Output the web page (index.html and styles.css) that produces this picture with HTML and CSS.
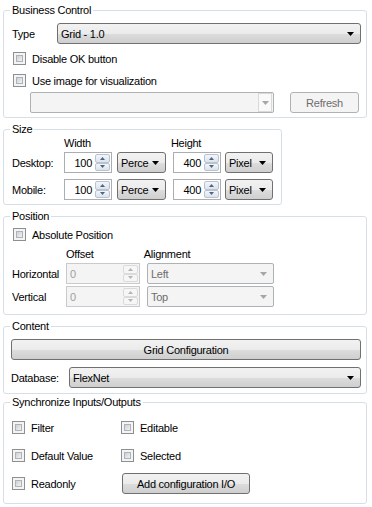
FILE: index.html
```html
<!DOCTYPE html>
<html lang="en">
<head>
    <meta charset="UTF-8">
    <title>Business Control</title>
    <link rel="stylesheet" href="styles.css">
</head>
<body>
    <div class="panel">
        <!-- Business Control -->
        <fieldset class="group group-business">
            <legend>Business Control</legend>
            <div class="row row-type">
                <span class="lbl lbl-type">Type</span>
                <div class="combo combo-type">
                    <span class="combo-text">Grid - 1.0</span>
                    <svg class="arrow" width="7" height="4" viewBox="0 0 7 4"><path d="M0 0h7L3.5 4z" fill="#000"/></svg>
                </div>
            </div>
            <div class="check check-ok"><span class="box"></span>Disable OK button</div>
            <div class="check check-image"><span class="box"></span>Use image for visualization</div>
            <div class="row row-image">
                <div class="combo-off combo-image">
                    <span class="combo-text"></span>
                    <span class="drop-off">
                        <svg width="7" height="4" viewBox="0 0 7 4"><path d="M0 0h7L3.5 4z" fill="#a6a6a6"/></svg>
                    </span>
                </div>
                <div class="btn-off btn-refresh">Refresh</div>
            </div>
        </fieldset>

        <!-- Size -->
        <fieldset class="group group-size">
            <legend>Size</legend>
            <div class="row row-head">
                <span class="head head-width">Width</span>
                <span class="head head-height">Height</span>
            </div>
            <div class="row row-size">
                <span class="lbl lbl-size">Desktop:</span>
                <div class="spin spin-size">
                    <span class="spin-text">100</span>
                    <span class="spin-btns">
                        <span class="spin-btn"><svg width="5" height="3" viewBox="0 0 5 3"><path d="M0 3h5L2.5 0z" fill="#4f6382"/></svg></span>
                        <span class="spin-btn"><svg width="5" height="3" viewBox="0 0 5 3"><path d="M0 0h5L2.5 3z" fill="#4f6382"/></svg></span>
                    </span>
                </div>
                <div class="combo combo-unit combo-perc">
                    <span class="combo-text">Perce</span>
                    <svg class="arrow" width="7" height="4" viewBox="0 0 7 4"><path d="M0 0h7L3.5 4z" fill="#000"/></svg>
                </div>
                <div class="spin spin-size spin-height">
                    <span class="spin-text">400</span>
                    <span class="spin-btns">
                        <span class="spin-btn"><svg width="5" height="3" viewBox="0 0 5 3"><path d="M0 3h5L2.5 0z" fill="#4f6382"/></svg></span>
                        <span class="spin-btn"><svg width="5" height="3" viewBox="0 0 5 3"><path d="M0 0h5L2.5 3z" fill="#4f6382"/></svg></span>
                    </span>
                </div>
                <div class="combo combo-unit combo-pixel">
                    <span class="combo-text">Pixel</span>
                    <svg class="arrow" width="7" height="4" viewBox="0 0 7 4"><path d="M0 0h7L3.5 4z" fill="#000"/></svg>
                </div>
            </div>
            <div class="row row-size row-mobile">
                <span class="lbl lbl-size">Mobile:</span>
                <div class="spin spin-size">
                    <span class="spin-text">100</span>
                    <span class="spin-btns">
                        <span class="spin-btn"><svg width="5" height="3" viewBox="0 0 5 3"><path d="M0 3h5L2.5 0z" fill="#4f6382"/></svg></span>
                        <span class="spin-btn"><svg width="5" height="3" viewBox="0 0 5 3"><path d="M0 0h5L2.5 3z" fill="#4f6382"/></svg></span>
                    </span>
                </div>
                <div class="combo combo-unit combo-perc">
                    <span class="combo-text">Perce</span>
                    <svg class="arrow" width="7" height="4" viewBox="0 0 7 4"><path d="M0 0h7L3.5 4z" fill="#000"/></svg>
                </div>
                <div class="spin spin-size spin-height">
                    <span class="spin-text">400</span>
                    <span class="spin-btns">
                        <span class="spin-btn"><svg width="5" height="3" viewBox="0 0 5 3"><path d="M0 3h5L2.5 0z" fill="#4f6382"/></svg></span>
                        <span class="spin-btn"><svg width="5" height="3" viewBox="0 0 5 3"><path d="M0 0h5L2.5 3z" fill="#4f6382"/></svg></span>
                    </span>
                </div>
                <div class="combo combo-unit combo-pixel">
                    <span class="combo-text">Pixel</span>
                    <svg class="arrow" width="7" height="4" viewBox="0 0 7 4"><path d="M0 0h7L3.5 4z" fill="#000"/></svg>
                </div>
            </div>
        </fieldset>

        <!-- Position -->
        <fieldset class="group group-position">
            <legend>Position</legend>
            <div class="check check-abs"><span class="box"></span>Absolute Position</div>
            <div class="row row-head">
                <span class="head head-offset">Offset</span>
                <span class="head head-align">Alignment</span>
            </div>
            <div class="row row-pos">
                <span class="lbl lbl-pos">Horizontal</span>
                <div class="spin-off">
                    <span class="spin-text">0</span>
                    <span class="spin-btns">
                        <span class="spin-btn"><svg width="5" height="3" viewBox="0 0 5 3"><path d="M0 3h5L2.5 0z" fill="#b4b4b4"/></svg></span>
                        <span class="spin-btn"><svg width="5" height="3" viewBox="0 0 5 3"><path d="M0 0h5L2.5 3z" fill="#b4b4b4"/></svg></span>
                    </span>
                </div>
                <div class="combo-off combo-align">
                    <span class="combo-text">Left</span>
                    <svg class="arrow" width="7" height="4" viewBox="0 0 7 4"><path d="M0 0h7L3.5 4z" fill="#a6a6a6"/></svg>
                </div>
            </div>
            <div class="row row-pos row-vertical">
                <span class="lbl lbl-pos">Vertical</span>
                <div class="spin-off">
                    <span class="spin-text">0</span>
                    <span class="spin-btns">
                        <span class="spin-btn"><svg width="5" height="3" viewBox="0 0 5 3"><path d="M0 3h5L2.5 0z" fill="#b4b4b4"/></svg></span>
                        <span class="spin-btn"><svg width="5" height="3" viewBox="0 0 5 3"><path d="M0 0h5L2.5 3z" fill="#b4b4b4"/></svg></span>
                    </span>
                </div>
                <div class="combo-off combo-align">
                    <span class="combo-text">Top</span>
                    <svg class="arrow" width="7" height="4" viewBox="0 0 7 4"><path d="M0 0h7L3.5 4z" fill="#a6a6a6"/></svg>
                </div>
            </div>
        </fieldset>

        <!-- Content -->
        <fieldset class="group group-content">
            <legend>Content</legend>
            <div class="btn btn-grid">Grid Configuration</div>
            <div class="row row-db">
                <span class="lbl lbl-db">Database:</span>
                <div class="combo combo-db">
                    <span class="combo-text">FlexNet</span>
                    <svg class="arrow" width="7" height="4" viewBox="0 0 7 4"><path d="M0 0h7L3.5 4z" fill="#000"/></svg>
                </div>
            </div>
        </fieldset>

        <!-- Synchronize -->
        <fieldset class="group group-sync">
            <legend>Synchronize Inputs/Outputs</legend>
            <div class="sync-grid">
                <div class="check"><span class="box"></span>Filter</div>
                <div class="check"><span class="box"></span>Editable</div>
                <div class="check"><span class="box"></span>Default Value</div>
                <div class="check"><span class="box"></span>Selected</div>
                <div class="check"><span class="box"></span>Readonly</div>
                <div class="btn btn-add">Add configuration I/O</div>
            </div>
        </fieldset>
    </div>
</body>
</html>
```

FILE: styles.css
```css
body {
    margin: 0;
    background: #fff;
    font-family: "Liberation Sans", Arial, sans-serif;
    font-size: 11px;
    letter-spacing: -0.25px;
    color: #000;
}
.panel {
    padding: 4px 0 0 3px;
    width: 364px;
}
.group {
    margin: 5px 0 0 0;
    border: 1px solid #d5dfe5;
    border-radius: 3px;
    padding: 0 5px 4px 8px;
    min-width: 0;
}
.group legend {
    padding: 0 2px;
    margin-left: -2px;
    line-height: 13px;
    height: 13px;
}
.group-business {
    margin-top: 0;
}
.row {
    display: flex;
    align-items: center;
}
.lbl {
    flex: none;
}

/* combo boxes */
.combo {
    display: flex;
    align-items: center;
    height: 21px;
    box-sizing: border-box;
    border: 1px solid #707070;
    border-radius: 3px;
    background: linear-gradient(#f2f2f2 0%, #ebebeb 50%, #dddddd 51%, #cfcfcf 100%);
    padding: 0 6px 0 3px;
}
.combo-text {
    flex: 1;
    white-space: nowrap;
    overflow: hidden;
}
.arrow {
    flex: none;
}
.combo-off {
    display: flex;
    align-items: center;
    height: 21px;
    box-sizing: border-box;
    border: 1px solid #adb2b5;
    border-radius: 2px;
    background: #f4f4f4;
    color: #6d6d6d;
    padding: 0 6px 0 3px;
}
.drop-off {
    display: flex;
    align-items: center;
    justify-content: center;
    width: 12px;
    height: 17px;
    border: 1px solid #d9d9d9;
    background: #f9f9f9;
    margin-right: -5px;
}

/* buttons */
.btn {
    display: flex;
    align-items: center;
    justify-content: center;
    height: 21px;
    box-sizing: border-box;
    border: 1px solid #707070;
    border-radius: 3px;
    background: linear-gradient(#f2f2f2 0%, #ebebeb 50%, #dddddd 51%, #cfcfcf 100%);
}
.btn-off {
    display: flex;
    align-items: center;
    justify-content: center;
    height: 21px;
    box-sizing: border-box;
    border: 1px solid #adb2b5;
    border-radius: 3px;
    background: #f4f4f4;
    color: #6d6d6d;
}

/* checkboxes */
.check {
    display: flex;
    align-items: center;
    height: 13px;
    white-space: nowrap;
}
.box {
    flex: none;
    width: 13px;
    height: 13px;
    box-sizing: border-box;
    border: 1px solid #8e8f8f;
    background: #f4f4f4;
    padding: 2px;
    margin: 0 6px 0 1px;
}
.box::after {
    content: "";
    display: block;
    width: 100%;
    height: 100%;
    box-sizing: border-box;
    border: 1px solid #aeb3b9;
    background: linear-gradient(135deg, #cbcfd5, #f2f2f3);
}

/* spin boxes */
.spin,
.spin-off {
    display: flex;
    align-items: center;
    height: 21px;
    box-sizing: border-box;
    border: 1px solid #abadb3;
    background: #fff;
    padding: 1px 1px 1px 3px;
}
.spin-off {
    border-color: #c9cacc;
    background: #f4f4f4;
    color: #a0a0a0;
}
.spin-text {
    flex: 1;
}
.spin .spin-text {
    text-align: right;
    padding-right: 3px;
}
.spin-btns {
    display: flex;
    flex-direction: column;
    width: 15px;
    height: 17px;
}
.spin-btn {
    flex: 1;
    display: flex;
    align-items: center;
    justify-content: center;
    border: 1px solid #b9c3cf;
    border-radius: 2px;
    background: linear-gradient(#f3f6fa, #dce3ec);
}
.spin-off .spin-btn {
    border-color: #dadada;
    background: #f6f6f6;
}

/* Business Control */
.row-type {
    margin-top: 6px;
}
.lbl-type {
    width: 45px;
}
.combo-type {
    width: 304px;
}
.check-ok {
    margin-top: 8px;
}
.check-image {
    margin-top: 9px;
}
.row-image {
    margin-top: 5px;
    padding-left: 18px;
}
.combo-image {
    width: 244px;
}
.btn-refresh {
    width: 69px;
    margin-left: 16px;
}

/* Size */
.group-size {
    width: 279px;
    box-sizing: border-box;
}
.row-head {
    height: 13px;
}
.head-width {
    margin-left: 52px;
}
.head-height {
    margin-left: 80px;
}
.row-size {
    margin-top: 3px;
}
.row-mobile {
    margin-top: 6px;
}
.lbl-size {
    width: 52px;
}
.spin-size {
    width: 48px;
}
.combo-unit {
    width: 49px;
    margin-left: 5px;
}
.spin-height {
    margin-left: 7px;
}
.combo-pixel {
    width: 48px;
    margin-left: 4px;
}

/* Position */
.check-abs {
    margin-top: 5px;
}
.group-position .row-head {
    margin-top: 6px;
}
.head-offset {
    margin-left: 54px;
}
.head-align {
    margin-left: 50px;
}
.row-pos {
    margin-top: 3px;
}
.row-vertical {
    margin-top: 2px;
}
.lbl-pos {
    width: 54px;
}
.row-pos .spin-off {
    width: 74px;
}
.combo-align {
    width: 127px;
    margin-left: 7px;
}
.group-position {
    padding-bottom: 7px;
}

/* Content */
.btn-grid {
    margin: 6px 0 0 -1px;
}
.row-db {
    margin-top: 7px;
}
.lbl-db {
    width: 58px;
    margin-left: -1px;
}
.combo-db {
    flex: 1;
}
.group-content {
    padding-bottom: 5px;
}

/* Synchronize */
.group-sync {
    margin-top: 2px;
    padding-bottom: 9px;
}
.sync-grid {
    display: grid;
    grid-template-columns: 109px 128px;
    grid-auto-rows: 21px;
    row-gap: 7px;
    align-items: center;
    margin-top: 8px;
}
.sync-grid .box {
    margin-left: 0;
}
.btn-add {
    width: 128px;
    margin-left: 1px;
}
```
